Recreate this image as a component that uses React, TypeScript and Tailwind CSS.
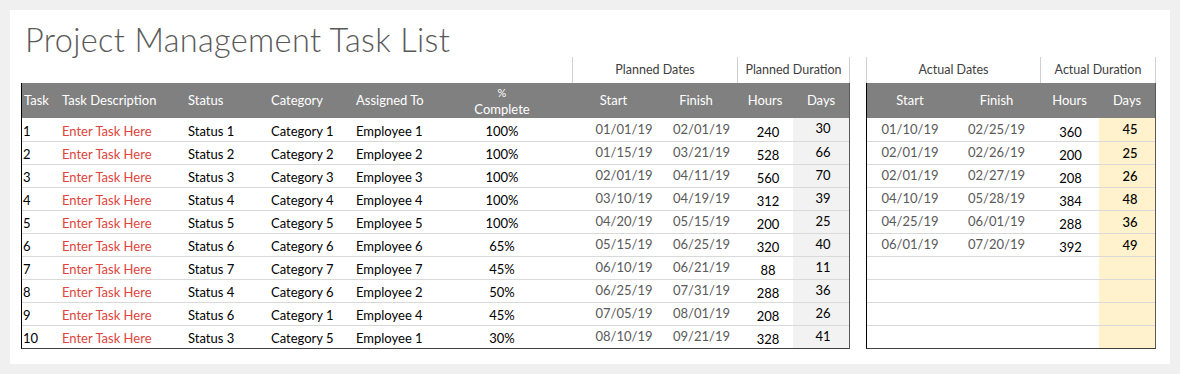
import React from "react";

const planned = [
  ["1", "Status 1", "Category 1", "Employee 1", "100%", "01/01/19", "02/01/19", "240", "30"],
  ["2", "Status 2", "Category 2", "Employee 2", "100%", "01/15/19", "03/21/19", "528", "66"],
  ["3", "Status 3", "Category 3", "Employee 3", "100%", "02/01/19", "04/11/19", "560", "70"],
  ["4", "Status 4", "Category 4", "Employee 4", "100%", "03/10/19", "04/19/19", "312", "39"],
  ["5", "Status 5", "Category 5", "Employee 5", "100%", "04/20/19", "05/15/19", "200", "25"],
  ["6", "Status 6", "Category 6", "Employee 6", "65%", "05/15/19", "06/25/19", "320", "40"],
  ["7", "Status 7", "Category 7", "Employee 7", "45%", "06/10/19", "06/21/19", "88", "11"],
  ["8", "Status 4", "Category 6", "Employee 2", "50%", "06/25/19", "07/31/19", "288", "36"],
  ["9", "Status 6", "Category 1", "Employee 4", "45%", "07/05/19", "08/01/19", "208", "26"],
  ["10", "Status 3", "Category 5", "Employee 1", "30%", "08/10/19", "09/21/19", "328", "41"],
];

const actual: string[][] = [
  ["01/10/19", "02/25/19", "360", "45"],
  ["02/01/19", "02/26/19", "200", "25"],
  ["02/01/19", "02/27/19", "208", "26"],
  ["04/10/19", "05/28/19", "384", "48"],
  ["04/25/19", "06/01/19", "288", "36"],
  ["06/01/19", "07/20/19", "392", "49"],
  ["", "", "", ""],
  ["", "", "", ""],
  ["", "", "", ""],
  ["", "", "", ""],
];

const font = { fontFamily: "Lato, 'Liberation Sans', sans-serif" };

export default function App() {
  return (
    <div className="w-[1180px] h-[374px] bg-[#f0f0f0] pt-[10px] pl-[10px]" style={font}>
      <div className="w-[1160px] h-[354px] bg-white pl-[11px]">
        <div className="h-[47px] pl-[4px] pt-[14px] text-[32.5px] leading-[32px] font-light text-[#595959] tracking-[0.35px]">
          Project Management Task List
        </div>
        <div className="flex gap-[16px]">
          {/* Left table */}
          <div className="w-[829px]">
            <div className="flex h-[26px] text-[12.5px] text-[#404040]">
              <div className="w-[551px]" />
              <div className="w-[165px] border-l border-[#d0d0d0] flex items-center justify-center">Planned Dates</div>
              <div className="w-[113px] border-l border-r border-[#d0d0d0] flex items-center justify-center">Planned Duration</div>
            </div>
            <div className="border-l border-l-black border-r border-r-[#595959] border-b border-b-[#404040]">
              <div className="flex h-[35px] bg-[#808080] text-white text-[13px]">
                <div className="w-[37px] pl-[2px] flex items-center">Task</div>
                <div className="w-[127px] pl-[3px] flex items-center">Task Description</div>
                <div className="w-[83px] pl-[2px] flex items-center">Status</div>
                <div className="w-[85px] pl-[2px] flex items-center">Category</div>
                <div className="w-[98px] pl-[2px] flex items-center">Assigned To</div>
                <div className="w-[100px] flex flex-col items-center justify-center leading-[16px]">
                  <span className="text-[11px]">%</span>
                  <span>Complete</span>
                </div>
                <div className="w-[20px]" />
                <div className="w-[83px] flex items-center justify-center">Start</div>
                <div className="w-[82px] flex items-center justify-center">Finish</div>
                <div className="w-[56px] flex items-center justify-center">Hours</div>
                <div className="w-[56px] flex items-center justify-center">Days</div>
              </div>
              {planned.map((r, i) => (
                <div
                  key={i}
                  className={`flex h-[23px] text-[13px] text-black ${i > 0 ? "border-t border-[#d9d9d9]" : ""}`}
                >
                  <div className="w-[37px] pl-[1px] pt-[4px] flex items-center">{r[0]}</div>
                  <div className="w-[127px] pl-[3px] pt-[4px] flex items-center text-[#e0443c]">Enter Task Here</div>
                  <div className="w-[83px] pl-[2px] pt-[4px] flex items-center">{r[1]}</div>
                  <div className="w-[85px] pl-[2px] pt-[4px] flex items-center">{r[2]}</div>
                  <div className="w-[98px] pl-[2px] pt-[4px] flex items-center">{r[3]}</div>
                  <div className="w-[100px] pt-[4px] flex items-center justify-center">{r[4]}</div>
                  <div className="w-[20px]" />
                  <div className="w-[83px] pl-[21px] flex items-center justify-center text-[#595959]">{r[5]}</div>
                  <div className="w-[82px] pl-[11px] flex items-center justify-center text-[#595959]">{r[6]}</div>
                  <div className="w-[56px] pl-[6px] pt-[6px] flex items-center justify-center">{r[7]}</div>
                  <div className="w-[56px] pl-[4px] pb-[1px] flex items-center justify-center bg-[#f2f2f2]">{r[8]}</div>
                </div>
              ))}
            </div>
          </div>
          {/* Right table */}
          <div className="w-[290px]">
            <div className="flex h-[26px] text-[12.5px] text-[#404040]">
              <div className="w-[174px] border-l border-[#d0d0d0] flex items-center justify-center">Actual Dates</div>
              <div className="w-[116px] border-l border-r border-[#d0d0d0] flex items-center justify-center">Actual Duration</div>
            </div>
            <div className="border-l border-l-black border-r border-r-[#595959] border-b border-b-[#404040]">
              <div className="flex h-[35px] bg-[#808080] text-white text-[13px]">
                <div className="w-[86px] flex items-center justify-center">Start</div>
                <div className="w-[87px] flex items-center justify-center">Finish</div>
                <div className="w-[59px] flex items-center justify-center">Hours</div>
                <div className="w-[56px] flex items-center justify-center">Days</div>
              </div>
              {actual.map((r, i) => (
                <div
                  key={i}
                  className={`flex h-[23px] text-[13px] text-black ${i > 0 ? "border-t border-[#d9d9d9]" : ""}`}
                >
                  <div className="w-[86px] flex items-center justify-center text-[#595959]">{r[0]}</div>
                  <div className="w-[87px] flex items-center justify-center text-[#595959]">{r[1]}</div>
                  <div className="w-[59px] pl-[2px] pt-[6px] flex items-center justify-center">{r[2]}</div>
                  <div className="w-[56px] pl-[6px] pt-[1px] flex items-center justify-center bg-[#fff2cc] font-medium">{r[3]}</div>
                </div>
              ))}
            </div>
          </div>
        </div>
      </div>
    </div>
  );
}
